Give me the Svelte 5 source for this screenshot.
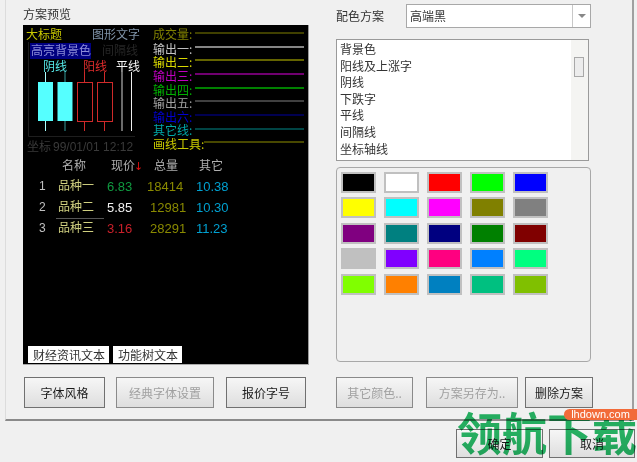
<script>
  const legend = [
    { label: '成交量:', color: '#808000', line: '#808000', ty: 39, ly: 33, w: 1 },
    { label: '输出一:', color: '#c4c4c4', line: '#858585', ty: 54, ly: 47, w: 2 },
    { label: '输出二:', color: '#d8d800', line: '#c8c800', ty: 67, ly: 60, w: 1 },
    { label: '输出三:', color: '#c000c0', line: '#e000e0', ty: 81, ly: 74, w: 1 },
    { label: '输出四:', color: '#00b000', line: '#008000', ty: 95, ly: 88, w: 2 },
    { label: '输出五:', color: '#a0a0a0', line: '#808080', ty: 108, ly: 101, w: 1 },
    { label: '输出六:', color: '#0000d0', line: '#0000a0', ty: 122, ly: 115, w: 1 },
    { label: '其它线:', color: '#00a8a8', line: '#008888', ty: 135, ly: 129, w: 1 },
    { label: '画线工具:', color: '#c8c800', line: '#909000', ty: 149, ly: 142, w: 1 }
  ]

  const rows = [
    { no: 1, name: '品种一', price: '6.83', tone: 'up', vol: '18414', other: '10.38' },
    { no: 2, name: '品种二', price: '5.85', tone: 'flat', vol: '12981', other: '10.30', shift: true, active: true },
    { no: 3, name: '品种三', price: '3.16', tone: 'down', vol: '28291', other: '11.23', shift: true }
  ]

  const schemeItems = ['背景色', '阳线及上涨字', '阴线', '下跌字', '平线', '间隔线', '坐标轴线']

  const swatches = [
    '#000000', '#ffffff', '#ff0000', '#00ff00', '#0000ff',
    '#ffff00', '#00ffff', '#ff00ff', '#808000', '#808080',
    '#800080', '#008080', '#000080', '#008000', '#800000',
    '#c0c0c0', '#8000ff', '#ff0080', '#0080ff', '#00ff80',
    '#80ff00', '#ff8000', '#0080c0', '#00c080', '#80c000'
  ]
</script>

<div class="window">
  <div class="pane">
    <section class="left">
      <div class="caption">方案预览</div>
      <div class="preview">
        <svg class="chart" width="286" height="128" viewBox="23 25 286 128">
          <text x="26" y="39" fill="#c8c800">大标题</text>
          <text x="92" y="39" fill="#7f93a8">图形文字</text>

          <path d="M28.5 42V136.5H135" fill="none" stroke="#1e1e1e" />
          <rect x="30" y="43" width="61" height="16" fill="#000080" />
          <text x="31" y="55" fill="#8c8cd8">高亮背景色</text>
          <text x="102" y="55" fill="#262626">间隔线</text>

          <text x="43" y="71" fill="#55e8e8">阴线</text>
          <text x="83" y="71" fill="#e02c2c">阳线</text>
          <text x="116" y="71" fill="#f4f4f4">平线</text>

          <path d="M45.5 72V131" stroke="#aaffff" />
          <rect x="38" y="82" width="15" height="39" fill="#55ffff" />
          <path d="M65 72V131" stroke="#339999" />
          <rect x="57.5" y="82" width="15" height="39" fill="#55ffff" />
          <path d="M84.5 72V131" stroke="#d02a2a" />
          <rect x="77.5" y="82.5" width="15" height="39" fill="#000" stroke="#d02a2a" />
          <path d="M104.5 72V131" stroke="#d02a2a" />
          <rect x="97.5" y="82.5" width="15" height="39" fill="#000" stroke="#d02a2a" />
          <path d="M122 72V131" stroke="#999" stroke-width="1.4" />
          <path d="M131.5 72V131" stroke="#eee" />

          <text x="27" y="151" fill="#3a3a3a">坐标</text>
          <text x="53" y="151" fill="#3a3a3a" class="latin">99/01/01 12:12</text>

          {#each legend as item}
            <text x="153" y={item.ty} fill={item.color}>{item.label}</text>
            <line
              x1={item.label.length > 4 ? 204 : 195}
              x2="304"
              y1={item.ly}
              y2={item.ly}
              stroke={item.line}
              stroke-width={item.w}
            />
          {/each}
        </svg>

        <div class="quotes">
          <div class="quote-row head">
            <span></span>
            <span class="c-name">名称</span>
            <span class="c-price">现价<b>↓</b></span>
            <span class="c-vol">总量</span>
            <span class="c-other">其它</span>
          </div>
          {#each rows as row}
            <div class="quote-row">
              <span class="no">{row.no}</span>
              <span class="name" class:active={row.active}>{row.name}</span>
              <span class="price {row.tone}">{row.price}</span>
              <span class="vol" class:shift={row.shift}>{row.vol}</span>
              <span class="other">{row.other}</span>
            </div>
          {/each}
        </div>

        <div class="tags">
          <span>财经资讯文本</span>
          <span>功能树文本</span>
        </div>
      </div>

      <div class="btn-row">
        <button class="b-font">字体风格</button>
        <button class="b-classic" disabled>经典字体设置</button>
        <button class="b-size">报价字号</button>
      </div>
    </section>

    <section class="right">
      <div class="scheme-row">
        <span class="scheme-label">配色方案</span>
        <div class="combo">
          <span class="combo-text">高端黑</span>
          <span class="combo-arrow"></span>
        </div>
      </div>

      <div class="list">
        <ul>
          {#each schemeItems as item}
            <li>{item}</li>
          {/each}
        </ul>
        <div class="scroll"><div class="thumb"></div></div>
      </div>

      <div class="palette">
        {#each swatches as color}
          <div class="swatch" style="background: {color}"></div>
        {/each}
      </div>

      <div class="btn-row">
        <button class="b-more" disabled>其它颜色..</button>
        <button class="b-save" disabled>方案另存为..</button>
        <button class="b-del">删除方案</button>
      </div>
    </section>
  </div>

  <div class="footer">
    <button class="b-ok">确定</button>
    <button class="b-cancel">取消</button>
  </div>

  <div class="watermark">
    <span class="wm-name">领航下载</span>
    <span class="wm-site">lhdown.com</span>
  </div>
</div>

<style>
  :global(body) {
    margin: 0;
    background: #f0f0f0;
  }

  .window {
    position: relative;
    width: 637px;
    height: 462px;
    overflow: hidden;
    background: #f0f0f0;
    color: #222;
    font-family: "Noto Sans CJK SC", "Liberation Sans", sans-serif;
    font-size: 12px;
  }

  .pane {
    box-sizing: border-box;
    display: flex;
    width: 629px;
    height: 421px;
    margin-left: 5px;
    padding-left: 17px;
    border-left: 1px solid #dcdcdc;
    border-right: 2px solid #a0a0a0;
    border-bottom: 2px solid #8a8a8a;
  }

  .left {
    display: flex;
    flex-direction: column;
    width: 313px;
  }

  .caption {
    height: 18px;
    margin-top: 5px;
    line-height: 18px;
    margin-bottom: 2px;
    color: #333;
  }

  .preview {
    box-sizing: border-box;
    display: flex;
    flex-direction: column;
    width: 286px;
    height: 340px;
    background: #000;
    border-right: 1px solid #999;
    border-bottom: 1px solid #aaa;
  }

  .chart {
    display: block;
    flex: none;
  }

  .chart text {
    font-size: 12px;
  }

  .chart .latin {
    font-family: "Liberation Sans", sans-serif;
  }

  .quotes {
    margin-top: 4px;
  }

  .quote-row {
    display: grid;
    grid-template-columns: 35px 49px 40px 49px 60px;
    height: 21px;
    line-height: 21px;
    font-family: "Liberation Sans", "Noto Sans CJK SC", sans-serif;
    font-size: 13px;
  }

  .head {
    height: 19px;
    line-height: 19px;
    color: #b0b0b0;
    font-size: 12px;
  }

  .head b {
    color: #e01010;
    font-family: "DejaVu Sans", sans-serif;
    font-size: 11px;
    font-weight: 400;
    margin-left: -1px;
  }

  .c-name,
  .c-price {
    padding-left: 4px;
    white-space: nowrap;
  }

  .c-vol {
    padding-left: 7px;
  }

  .c-other {
    padding-left: 3px;
  }

  .no {
    padding-left: 16px;
    color: #c0c0c0;
    font-size: 12px;
  }

  .name {
    position: relative;
    color: #d0d080;
    font-size: 12px;
  }

  .name.active::after {
    content: '';
    position: absolute;
    left: -2px;
    width: 48px;
    bottom: -1px;
    height: 1px;
    background: #555;
  }

  .price.up {
    color: #109a40;
  }

  .price.flat {
    color: #f0f0f0;
  }

  .price.down {
    color: #c8202a;
  }

  .vol {
    color: #8a8a00;
  }

  .vol.shift {
    padding-left: 3px;
  }

  .other {
    color: #00a0d0;
  }

  .tags {
    display: flex;
    gap: 4px;
    margin-top: auto;
    padding-left: 5px;
    margin-bottom: 1px;
  }

  .tags span {
    padding: 0 4px 0 5px;
    height: 17px;
    line-height: 17px;
    background: #fff;
    color: #333;
  }

  .btn-row {
    display: flex;
    margin-top: 12px;
  }

  button {
    box-sizing: border-box;
    height: 31px;
    padding: 0;
    border: 1px solid #707070;
    border-radius: 0;
    background: linear-gradient(#f6f6f6, #dedede);
    color: #1a1a1a;
    font-family: inherit;
    font-size: 12px;
  }

  button:disabled {
    border-color: #8a8a8a;
    color: #a0a0a0;
  }

  .b-font {
    width: 81px;
    margin-left: 1px;
  }

  .b-classic {
    width: 98px;
    margin-left: 11px;
  }

  .b-size {
    width: 80px;
    margin-left: 12px;
  }

  .right {
    display: flex;
    flex-direction: column;
    width: 258px;
    flex: none;
  }

  .scheme-row {
    display: flex;
    align-items: center;
    gap: 22px;
    height: 23px;
    margin-top: 4px;
    color: #333;
  }

  .scheme-label {
    flex: none;
    white-space: nowrap;
  }

  .combo {
    box-sizing: border-box;
    flex: none;
    display: flex;
    align-items: center;
    width: 185px;
    height: 24px;
    background: #fff;
    border: 1px solid #a8a8a8;
  }

  .combo-text {
    flex: 1;
    padding-left: 3px;
  }

  .combo-arrow {
    position: relative;
    width: 17px;
    height: 100%;
    border-left: 1px solid #c8c8c8;
  }

  .combo-arrow::after {
    content: '';
    position: absolute;
    left: 5px;
    top: 9px;
    border: 4px solid transparent;
    border-top: 4px solid #888;
    border-bottom: 0;
  }

  .list {
    box-sizing: border-box;
    display: flex;
    width: 253px;
    height: 122px;
    margin-top: 12px;
    background: #fff;
    border: 1px solid #9a9a9a;
  }

  .list ul {
    flex: 1;
    margin: 0;
    padding: 1px 0 0 3px;
    list-style: none;
  }

  .list li {
    height: 16.6px;
    line-height: 16.6px;
    color: #333;
  }

  .scroll {
    width: 17px;
    background: #f4f4f2;
  }

  .thumb {
    box-sizing: border-box;
    width: 10px;
    height: 20px;
    margin: 17px 0 0 3px;
    background: #ececec;
    border: 1px solid #a8a8a8;
  }

  .palette {
    box-sizing: border-box;
    display: grid;
    grid-template-columns: repeat(5, 35px);
    grid-auto-rows: 21px;
    column-gap: 8px;
    row-gap: 4.4px;
    align-content: start;
    width: 255px;
    height: 195px;
    margin-top: 6px;
    padding: 4px 0 0 4px;
    border: 1px solid #a8a8a8;
    border-radius: 4px;
  }

  .swatch {
    box-sizing: border-box;
    border: 2px solid #c0c0c0;
  }

  .b-more {
    flex: none;
    width: 77px;
  }

  .b-save {
    flex: none;
    width: 92px;
    margin-left: 13px;
  }

  .b-del {
    flex: none;
    width: 68px;
    margin-left: 7px;
  }

  .right .btn-row {
    margin-top: 15px;
  }

  .footer {
    display: flex;
    gap: 6px;
    margin: 8px 0 0 456px;
  }

  .footer button {
    flex: none;
    height: 29px;
  }

  .b-ok {
    width: 87px;
  }

  .b-cancel {
    width: 86px;
  }

  /* site watermark sits over the dialog buttons */
  .watermark {
    position: absolute;
    left: 457px;
    top: 402px;
    width: 180px;
    height: 60px;
  }

  .wm-name {
    position: absolute;
    left: 0;
    top: 0;
    color: #27b765;
    font-size: 45px;
    line-height: 60px;
    font-weight: 700;
    white-space: nowrap;
    mix-blend-mode: multiply;
  }

  .wm-site {
    position: absolute;
    right: 0;
    top: 7px;
    width: 73px;
    height: 11px;
    border-radius: 6px 0 0 6px;
    background: #f26b3a;
    color: #fff;
    font-family: "Liberation Sans", sans-serif;
    font-size: 11px;
    line-height: 11px;
    text-align: center;
  }
</style>
